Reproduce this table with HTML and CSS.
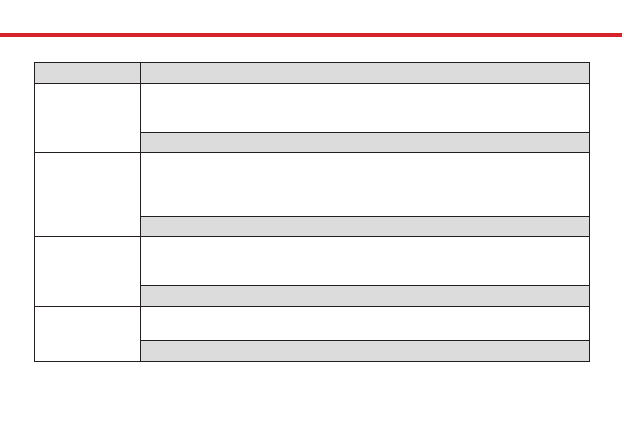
FILE: index.html
```html
<!DOCTYPE html>
<html lang="en">
<head>
    <meta charset="UTF-8">
    <meta name="viewport" content="width=device-width, initial-scale=1.0">
    <title>Table</title>
    <link rel="stylesheet" href="styles.css">
</head>
<body>
    <div class="page">
        <div class="rule"></div>
        <div class="grid">
            <div class="cell head"></div>
            <div class="cell head"></div>

            <div class="cell label span"></div>
            <div class="cell body h48"></div>
            <div class="cell sub"></div>

            <div class="cell label span"></div>
            <div class="cell body h63"></div>
            <div class="cell sub"></div>

            <div class="cell label span"></div>
            <div class="cell body h48"></div>
            <div class="cell sub h20"></div>

            <div class="cell label span"></div>
            <div class="cell body h33"></div>
            <div class="cell sub h20"></div>
        </div>
    </div>
</body>
</html>
```

FILE: styles.css
```css
body {
    margin: 0;
    background: #fff;
    font-family: "Liberation Sans", Arial, sans-serif;
}
.page {
    padding-top: 33px;
}
.rule {
    width: 622px;
    height: 4px;
    background-color: #d6222a;
}
.grid {
    display: grid;
    grid-template-columns: 105px 448px;
    gap: 1px;
    padding: 1px;
    width: 554px;
    margin: 25px 0 0 34px;
    background-color: #231f20;
}
.cell {
    background: #fff;
}
.head {
    height: 20px;
    background: #dcdcdc;
}
.span {
    grid-row: span 2;
}
.sub {
    height: 19px;
    background: #dcdcdc;
}
.h20 { height: 20px; }
.h33 { height: 33px; }
.h48 { height: 48px; }
.h63 { height: 63px; }
```
